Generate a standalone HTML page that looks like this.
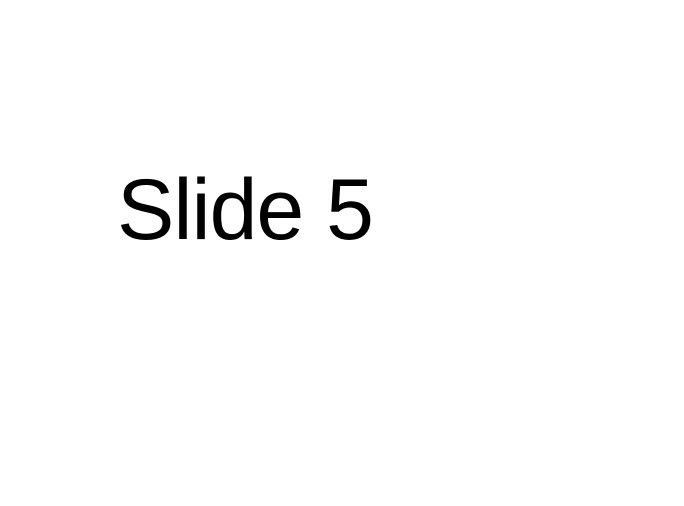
<!DOCTYPE html>
<html><head><meta charset="utf-8"><style>
html,body{margin:0;padding:0;background:#fff;width:684px;height:506px;overflow:hidden}
.t{position:absolute;left:117px;top:167px;font-family:"Liberation Sans",sans-serif;font-size:86px;line-height:1;letter-spacing:-1px;color:#000;white-space:nowrap}
</style></head><body><div class="t">Slide 5</div></body></html>
